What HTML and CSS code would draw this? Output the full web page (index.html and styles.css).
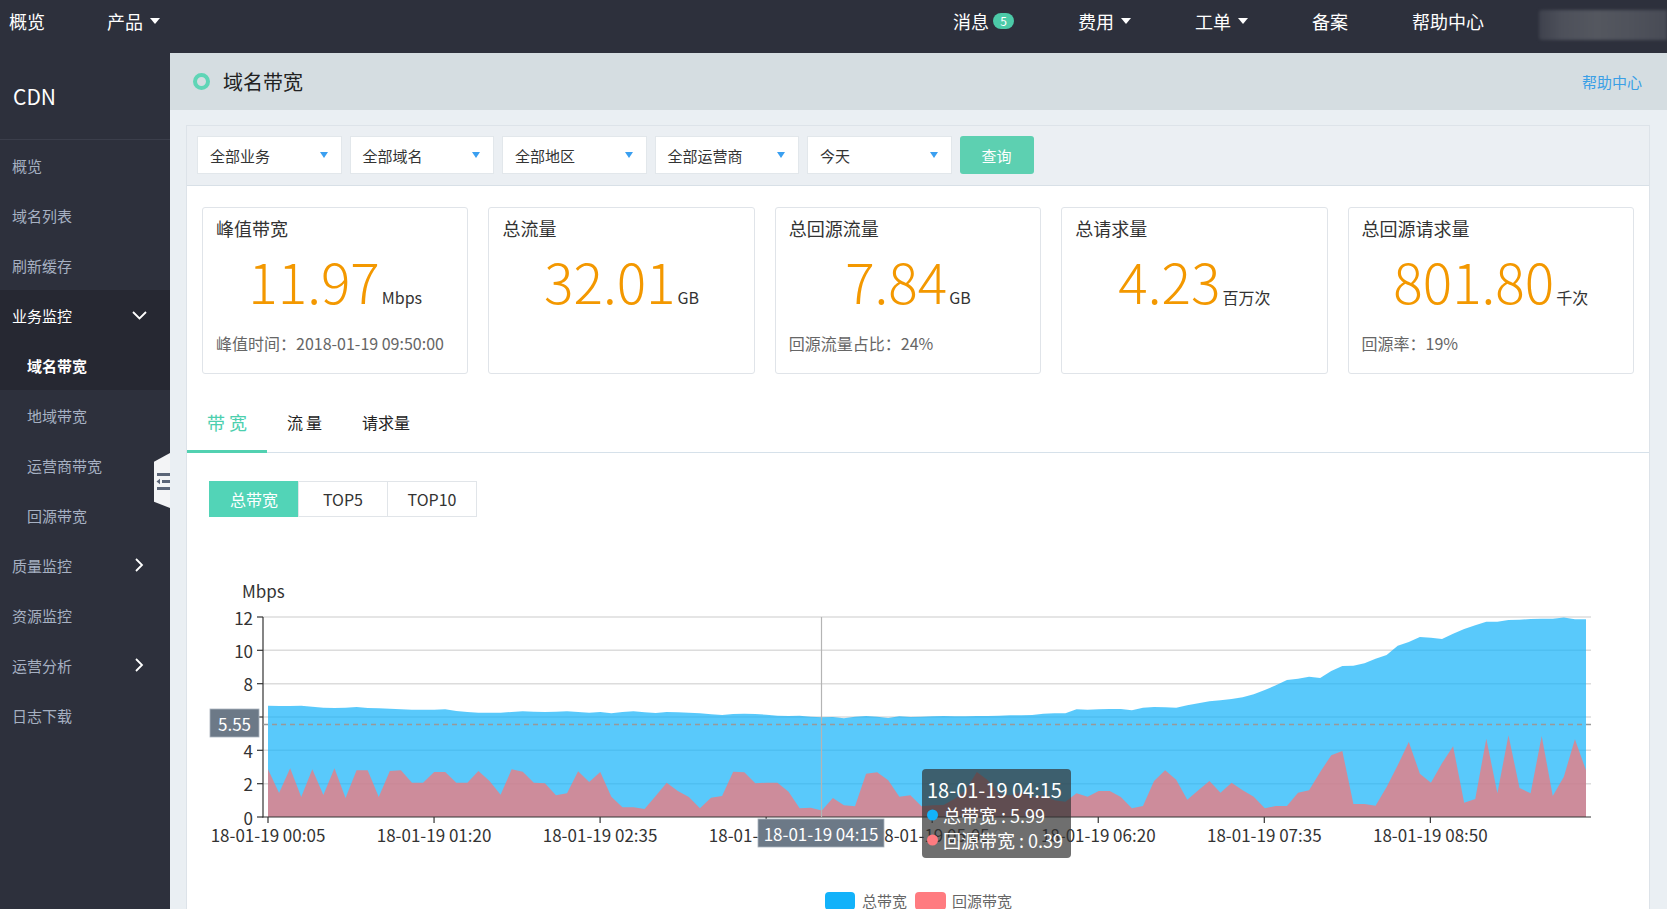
FILE: index.html
```html
<!DOCTYPE html>
<html lang="zh-CN">
<head>
<meta charset="utf-8">
<title>域名带宽 - CDN</title>
<link rel="stylesheet" href="styles.css">
</head>
<body>
<header class="topbar">
  <nav class="tnav-left">
    <a class="tnav">概览</a>
    <a class="tnav">产品<i class="caret"></i></a>
  </nav>
  <nav class="tnav-right">
    <a class="tnav">消息<span class="badge">5</span></a>
    <a class="tnav">费用<i class="caret"></i></a>
    <a class="tnav">工单<i class="caret"></i></a>
    <a class="tnav">备案</a>
    <a class="tnav">帮助中心</a>
  </nav>
  <div class="avatar"></div>
</header>

<div class="layout">
  <aside class="sidebar">
    <div class="brand">CDN</div>
    <ul class="menu">
      <li class="mi">概览</li>
      <li class="mi">域名列表</li>
      <li class="mi">刷新缓存</li>
      <li class="group">
        <div class="mi mi-head">业务监控
          <svg class="chev" width="15" height="9" viewBox="0 0 15 9"><polyline points="1,1 7.5,7.5 14,1" fill="none" stroke="#fff" stroke-width="1.8"/></svg>
        </div>
        <div class="mi sub active">域名带宽</div>
      </li>
      <li class="mi sub">地域带宽</li>
      <li class="mi sub">运营商带宽</li>
      <li class="mi sub">回源带宽</li>
      <li class="mi">质量监控
        <svg class="chev" width="15" height="14" viewBox="0 0 15 14"><polyline points="4,1 10,7 4,13" fill="none" stroke="#fff" stroke-width="1.8"/></svg>
      </li>
      <li class="mi">资源监控</li>
      <li class="mi">运营分析
        <svg class="chev" width="15" height="14" viewBox="0 0 15 14"><polyline points="4,1 10,7 4,13" fill="none" stroke="#fff" stroke-width="1.8"/></svg>
      </li>
      <li class="mi">日志下载</li>
    </ul>
    <div class="handle">
      <svg width="16" height="55" viewBox="0 0 16 55">
        <polygon points="0,8.7 16,0 16,55 0,48.7" fill="#f3f4f6"/>
        <rect x="3" y="20" width="13" height="3" fill="#5b6578"/>
        <polygon points="2.5,28.5 6,25.8 6,31.2" fill="#5b6578"/>
        <rect x="8" y="27" width="8" height="3" fill="#5b6578"/>
        <rect x="3" y="34" width="13" height="3" fill="#5b6578"/>
      </svg>
    </div>
  </aside>

  <main class="main">
    <div class="page-head">
      <span class="ring"></span>
      <span class="page-title">域名带宽</span>
      <a class="help">帮助中心</a>
    </div>

    <section class="panel">
      <div class="filters">
        <div class="dd"><span>全部业务</span><i class="dd-arrow"></i></div>
        <div class="dd"><span>全部域名</span><i class="dd-arrow"></i></div>
        <div class="dd"><span>全部地区</span><i class="dd-arrow"></i></div>
        <div class="dd"><span>全部运营商</span><i class="dd-arrow"></i></div>
        <div class="dd"><span>今天</span><i class="dd-arrow"></i></div>
        <button class="btn-query">查询</button>
      </div>

      <div class="cards">
        <div class="card-col"><div class="card">
          <div class="card-title">峰值带宽</div>
          <div class="card-value"><span class="num">11.97</span><span class="unit">Mbps</span></div>
          <div class="card-foot">峰值时间：2018-01-19 09:50:00</div>
        </div></div>
        <div class="card-col"><div class="card">
          <div class="card-title">总流量</div>
          <div class="card-value"><span class="num">32.01</span><span class="unit">GB</span></div>
        </div></div>
        <div class="card-col"><div class="card">
          <div class="card-title">总回源流量</div>
          <div class="card-value"><span class="num">7.84</span><span class="unit">GB</span></div>
          <div class="card-foot">回源流量占比：24%</div>
        </div></div>
        <div class="card-col"><div class="card">
          <div class="card-title">总请求量</div>
          <div class="card-value"><span class="num">4.23</span><span class="unit">百万次</span></div>
        </div></div>
        <div class="card-col"><div class="card">
          <div class="card-title">总回源请求量</div>
          <div class="card-value"><span class="num">801.80</span><span class="unit">千次</span></div>
          <div class="card-foot">回源率：19%</div>
        </div></div>
      </div>

      <div class="tabs">
        <a class="tab active">带宽</a>
        <a class="tab spaced">流量</a>
        <a class="tab">请求量</a>
      </div>

      <div class="seg">
        <span class="seg-btn active">总带宽</span>
        <span class="seg-btn">TOP5</span>
        <span class="seg-btn">TOP10</span>
      </div>

      <svg class="chart" width="1462" height="392" viewBox="187 517 1462 392" font-family="'Noto Sans CJK SC', 'Noto Sans', sans-serif">
        <text x="242" y="590" font-size="17" fill="#333" dominant-baseline="central">Mbps</text>
        <g stroke="#dcdcdc" stroke-width="1.5">
          <line x1="263" y1="617" x2="1591" y2="617"/>
          <line x1="263" y1="650.3" x2="1591" y2="650.3"/>
          <line x1="263" y1="683.7" x2="1591" y2="683.7"/>
          <line x1="263" y1="717" x2="1591" y2="717"/>
          <line x1="263" y1="750.3" x2="1591" y2="750.3"/>
          <line x1="263" y1="783.7" x2="1591" y2="783.7"/>
        </g>
        <g font-size="17" fill="#333" text-anchor="end" dominant-baseline="central">
          <text x="253" y="617">12</text>
          <text x="253" y="650.3">10</text>
          <text x="253" y="683.7">8</text>
          <text x="253" y="750.3">4</text>
          <text x="253" y="783.7">2</text>
          <text x="253" y="817">0</text>
        </g>
        <g transform="translate(268,817) scale(11.0756,-16.6667)">
          <polygon fill="#12b2fa" fill-opacity="0.7" points="0,0 0,6.67 1,6.66 2,6.66 3,6.68 4,6.62 5,6.56 6,6.54 7,6.56 8,6.6 9,6.54 10,6.52 11,6.5 12,6.46 13,6.44 14,6.44 15,6.44 16,6.46 17,6.36 18,6.3 19,6.26 20,6.26 21,6.26 22,6.3 23,6.34 24,6.32 25,6.3 26,6.32 27,6.34 28,6.3 29,6.26 30,6.3 31,6.22 32,6.3 33,6.34 34,6.28 35,6.24 36,6.3 37,6.28 38,6.26 39,6.22 40,6.16 41,6.12 42,6.18 43,6.2 44,6.18 45,6.14 46,6.08 47,6.06 48,6.08 49,6.02 50,5.99 51,6 52,5.92 53,6.02 54,6.06 55,6.02 56,5.94 57,6.04 58,6 59,6.02 60,6.04 61,6.06 62,6.04 63,6.04 64,6.06 65,6.06 66,6.08 67,6.1 68,6.1 69,6.12 70,6.2 71,6.22 72,6.22 73,6.46 74,6.44 75,6.46 76,6.48 77,6.48 78,6.4 79,6.56 80,6.6 81,6.58 82,6.56 83,6.7 84,6.82 85,6.94 86,7 87,7.08 88,7.18 89,7.36 90,7.62 91,7.9 92,8.22 93,8.3 94,8.42 95,8.34 96,8.76 97,9.06 98,9.08 99,9.22 100,9.5 101,9.72 102,10.28 103,10.5 104,10.8 105,10.76 106,10.68 107,11 108,11.28 109,11.5 110,11.72 111,11.72 112,11.82 113,11.84 114,11.88 115,11.9 116,11.9 117,11.97 118,11.86 119,11.86 119,0"/>
          <polygon fill="#ff7272" fill-opacity="0.7" points="0,0 0,2.86 1,1.44 2,2.92 3,1.2 4,2.86 5,1.32 6,2.92 7,1.14 8,2.8 9,2.8 10,1.2 11,2.76 12,2.8 13,2.06 14,2.06 15,2.7 16,2.7 17,2.06 18,2.06 19,2.76 20,2.16 21,1.34 22,2.86 23,2.72 24,2.06 25,2.02 26,1.3 27,1.42 28,2.74 29,2.1 30,2.7 31,1.22 32,0.58 33,0.58 34,0.48 35,1.26 36,2.06 37,1.56 38,1.2 39,0.52 40,1.16 41,1.26 42,2.72 43,2.68 44,2.02 45,2.06 46,2.06 47,1.52 48,0.52 49,0.56 50,0.39 51,1.14 52,0.7 53,0.64 54,2.6 55,2.68 56,2.2 57,1.22 58,1.3 59,0.64 60,0.7 61,0.72 62,1.1 63,1.6 64,2.7 65,2.2 66,1.4 67,1.3 68,1.5 69,1.2 70,1.3 71,1 72,0.92 73,1.42 74,1.22 75,1.56 76,1.56 77,1.2 78,0.52 79,0.66 80,2.16 81,2.8 82,2.24 83,1.04 84,1.6 85,2.16 86,1.46 87,2.06 88,1.6 89,1.22 90,0.52 91,0.66 92,0.66 93,1.46 94,1.6 95,2.7 96,3.7 97,3.96 98,0.78 99,0.78 100,0.68 101,1.8 102,3.1 103,4.5 104,2.6 105,2.06 106,3.22 107,4.24 108,0.86 109,1.08 110,4.7 111,1.42 112,4.9 113,1.74 114,1.42 115,4.86 116,1.26 117,2.42 118,4.66 119,2.8 119,0"/>
        </g>
        <g stroke="#333" stroke-width="1.2">
          <line x1="263" y1="617" x2="263" y2="817.5"/>
          <line x1="262.5" y1="817" x2="1591" y2="817"/>
          <line x1="257" y1="617" x2="263" y2="617"/>
          <line x1="257" y1="650.3" x2="263" y2="650.3"/>
          <line x1="257" y1="683.7" x2="263" y2="683.7"/>
          <line x1="257" y1="717" x2="263" y2="717"/>
          <line x1="257" y1="750.3" x2="263" y2="750.3"/>
          <line x1="257" y1="783.7" x2="263" y2="783.7"/>
          <line x1="257" y1="817" x2="263" y2="817"/>
          <line x1="268" y1="817" x2="268" y2="823"/>
          <line x1="434.05" y1="817" x2="434.05" y2="823"/>
          <line x1="600.1" y1="817" x2="600.1" y2="823"/>
          <line x1="766.15" y1="817" x2="766.15" y2="823"/>
          <line x1="932.2" y1="817" x2="932.2" y2="823"/>
          <line x1="1098.25" y1="817" x2="1098.25" y2="823"/>
          <line x1="1264.3" y1="817" x2="1264.3" y2="823"/>
          <line x1="1430.35" y1="817" x2="1430.35" y2="823"/>
        </g>
        <g font-size="17" fill="#333" text-anchor="middle" dominant-baseline="central">
          <text x="268" y="834">18-01-19 00:05</text>
          <text x="434.05" y="834">18-01-19 01:20</text>
          <text x="600.1" y="834">18-01-19 02:35</text>
          <text x="766.15" y="834">18-01-19 03:50</text>
          <text x="932.2" y="834">18-01-19 05:05</text>
          <text x="1098.25" y="834">18-01-19 06:20</text>
          <text x="1264.3" y="834">18-01-19 07:35</text>
          <text x="1430.35" y="834">18-01-19 08:50</text>
        </g>
        <line x1="821.5" y1="617" x2="821.5" y2="817" stroke="#b4b4b4" stroke-width="1.2"/>
        <line x1="263" y1="724.5" x2="1591" y2="724.5" stroke="#999" stroke-width="1.5" stroke-dasharray="5 4"/>
        <rect x="210" y="709" width="49" height="28" fill="#6c7987" stroke="#aab3bd" stroke-width="0.8"/>
        <text x="234.5" y="723" font-size="17" fill="#fff" text-anchor="middle" dominant-baseline="central">5.55</text>
        <rect x="758" y="819" width="126" height="28" fill="#6c7987" stroke="#aab3bd" stroke-width="0.8"/>
        <text x="821" y="833" font-size="17" fill="#fff" text-anchor="middle" dominant-baseline="central">18-01-19 04:15</text>
        <rect x="922" y="769" width="149" height="89" rx="4" fill="rgb(50,50,50)" fill-opacity="0.7"/>
        <g fill="#fff" dominant-baseline="central">
          <text x="927" y="789" font-size="20">18-01-19 04:15</text>
          <circle cx="932.5" cy="815" r="5.5" fill="#12b2fa"/>
          <text x="943" y="815" font-size="18">总带宽 : 5.99</text>
          <circle cx="932.5" cy="840" r="5.5" fill="#ff7b80"/>
          <text x="943" y="840" font-size="18">回源带宽 : 0.39</text>
        </g>
        <rect x="825" y="892" width="30" height="18" rx="4" fill="#12b2fa"/>
        <text x="862" y="900" font-size="15" fill="#666" dominant-baseline="central">总带宽</text>
        <rect x="915" y="892" width="31" height="18" rx="4" fill="#ff7b80"/>
        <text x="952" y="900" font-size="15" fill="#666" dominant-baseline="central">回源带宽</text>
      </svg>
    </section>
  </main>
</div>
</body>
</html>
```

FILE: styles.css
```css
html, body {
  margin: 0;
  padding: 0;
}
body {
  width: 1667px;
  height: 909px;
  overflow: hidden;
  font-family: "Noto Sans CJK SC", "Noto Sans", sans-serif;
  color: #333;
}
a { text-decoration: none; cursor: pointer; }
ul { list-style: none; margin: 0; padding: 0; }

/* top bar */
.topbar {
  height: 53px;
  background: #2d303c;
  display: flex;
  align-items: flex-start;
}
.tnav-left {
  display: flex;
  gap: 62px;
  padding-left: 9px;
}
.tnav-right {
  display: flex;
  gap: 64px;
  margin-left: auto;
}
.tnav {
  display: flex;
  align-items: center;
  font-size: 18px;
  line-height: 42px;
  color: #fff;
  white-space: nowrap;
}
.caret {
  width: 0;
  height: 0;
  margin-left: 7px;
  border-left: 5.5px solid transparent;
  border-right: 5.5px solid transparent;
  border-top: 6px solid #fff;
}
.badge {
  margin-left: 4px;
  width: 21px;
  height: 16px;
  border-radius: 8px;
  background: #4ccaa8;
  color: #fff;
  font-size: 12px;
  line-height: 16px;
  text-align: center;
}
.avatar {
  width: 128px;
  height: 30px;
  margin-top: 10px;
  margin-left: 55px;
  border-radius: 3px 0 0 3px;
  background: linear-gradient(90deg, #3f424d 0%, #4d505a 18%, #54575f 45%, #4f525b 72%, #484b55 100%);
  filter: blur(1.5px);
}

/* layout */
.layout {
  display: flex;
  height: 856px;
}

/* sidebar */
.sidebar {
  position: relative;
  width: 170px;
  flex: none;
  background: #2d303c;
}
.brand {
  height: 86px;
  line-height: 86px;
  padding-left: 13px;
  font-size: 21px;
  color: #fff;
  border-bottom: 1px solid #3b3e4b;
}
.mi {
  height: 50px;
  display: flex;
  align-items: center;
  justify-content: space-between;
  padding: 0 23px 0 12px;
  font-size: 15px;
  color: #a6b0c2;
}
.mi.sub {
  padding-left: 27px;
}
.group {
  background: #262832;
}
.mi-head {
  color: #fff;
}
.mi.active {
  color: #fff;
  font-weight: bold;
}
.chev {
  flex: none;
}
.handle {
  position: absolute;
  left: 154px;
  top: 400px;
  width: 16px;
  height: 55px;
}
.handle svg { display: block; }

/* main */
.main {
  flex: 1;
  min-width: 0;
  display: flex;
  flex-direction: column;
  background: #eaeff3;
}
.page-head {
  height: 57px;
  flex: none;
  display: flex;
  align-items: center;
  padding: 0 25px 0 23px;
  background: #d5dde1;
}
.ring {
  width: 17px;
  height: 17px;
  box-sizing: border-box;
  border: 4px solid #5fd5b6;
  border-radius: 50%;
}
.page-title {
  margin-left: 13px;
  font-size: 20px;
  color: #222;
}
.help {
  margin-left: auto;
  font-size: 15px;
  color: #3a9fe6;
}

.panel {
  flex: 1;
  margin: 15px 17px 0 16px;
  background: #fff;
  border: 1px solid #dde3e9;
  border-bottom: none;
}

/* filters */
.filters {
  display: flex;
  gap: 8px;
  padding: 10px 10px 11px;
  background: #ebeff3;
  border-bottom: 1px solid #d8e0e7;
}
.dd {
  width: 144.5px;
  height: 38px;
  box-sizing: border-box;
  display: flex;
  align-items: center;
  justify-content: space-between;
  padding: 0 13px 0 12px;
  background: #fff;
  border: 1px solid #e2e7eb;
  font-size: 15px;
  color: #333;
}
.dd-arrow {
  width: 0;
  height: 0;
  border-left: 4.5px solid transparent;
  border-right: 4.5px solid transparent;
  border-top: 6px solid #3a9ff0;
}
.btn-query {
  width: 74px;
  height: 38px;
  border: none;
  border-radius: 3px;
  background: #5dd0b1;
  color: #fff;
  font-family: inherit;
  font-size: 15px;
  padding: 0;
}

/* cards */
.cards {
  display: flex;
  padding: 21px 15px 0;
}
.card-col {
  flex: 0 0 20%;
  box-sizing: border-box;
  padding-right: 20px;
}
.card-col:last-child {
  padding-right: 0;
}
.card {
  height: 167px;
  box-sizing: border-box;
  padding: 8px 13px 0;
  border: 1px solid #e0e4e9;
  border-radius: 3px;
}
.card-title {
  font-size: 18px;
  line-height: 24px;
  color: #333;
}
.card-value {
  margin-top: 10px;
  font-size: 55px;
  line-height: 60px;
  text-align: center;
  white-space: nowrap;
}
.num {
  color: #f39800;
  font-weight: 300;
}
.unit {
  margin-left: 2px;
  font-size: 16px;
  line-height: 1;
  color: #333;
}
.card-foot {
  margin-top: 22px;
  font-size: 16px;
  line-height: 22px;
  color: #666;
  white-space: nowrap;
}

/* tabs */
.tabs {
  display: flex;
  margin-top: 22px;
  border-bottom: 1px solid #d6e1ea;
}
.tab {
  padding: 14px 20px 16px;
  margin-bottom: -1px;
  font-size: 16px;
  line-height: 24px;
  color: #222;
  border-bottom: 3px solid transparent;
}
.tab.spaced {
  letter-spacing: 3px;
  padding-right: 17px;
}
.tab.active {
  font-size: 18px;
  letter-spacing: 4px;
  padding-right: 16px;
  color: #4dcfae;
  border-bottom-color: #52d1b1;
}

/* segmented buttons */
.seg {
  display: flex;
  margin: 28px 0 0 22px;
}
.seg-btn {
  width: 90px;
  height: 36px;
  box-sizing: border-box;
  display: flex;
  align-items: center;
  justify-content: center;
  margin-left: -1px;
  border: 1px solid #e1e5e9;
  font-size: 16px;
  color: #333;
}
.seg-btn.active {
  margin-left: 0;
  background: #52d4b7;
  border-color: #52d4b7;
  color: #fff;
}

.chart {
  display: block;
}
```
